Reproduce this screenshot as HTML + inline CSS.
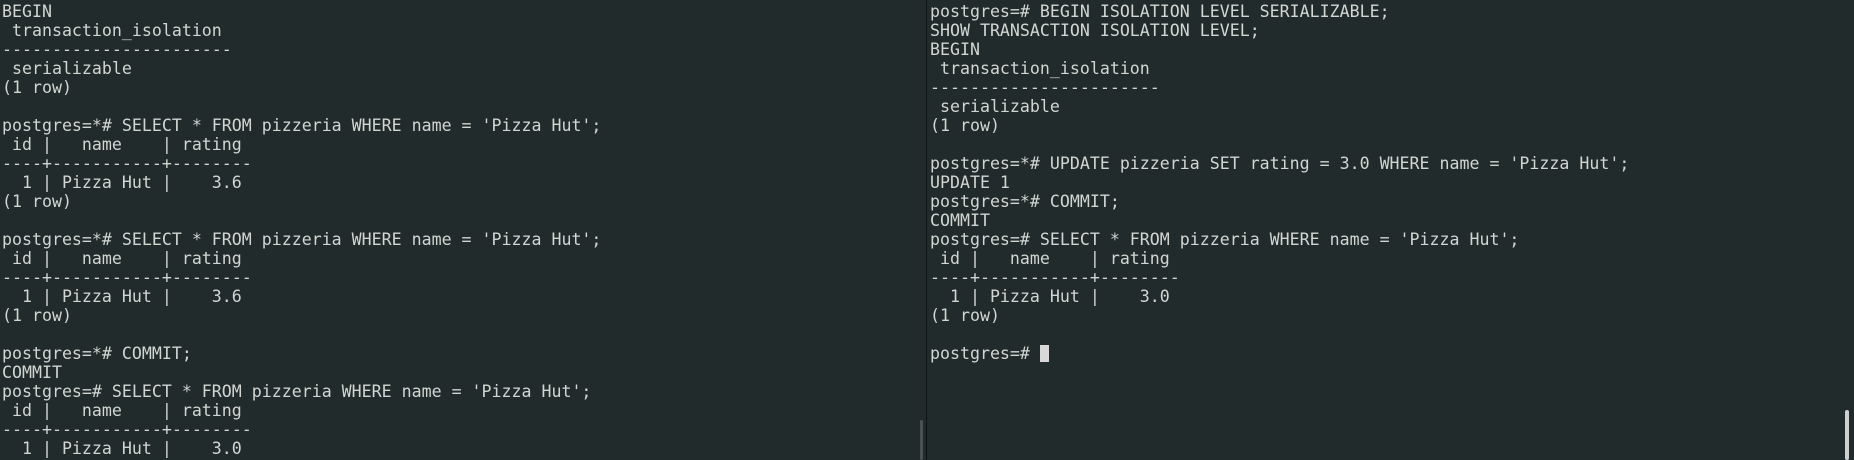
<!DOCTYPE html>
<html><head><meta charset="utf-8"><style>
html,body{margin:0;padding:0;width:1854px;height:460px;overflow:hidden;background:#212b2b;}
.pane{position:absolute;top:0;height:460px;overflow:hidden;}
pre{margin:0;font-family:"DejaVu Sans Mono","Liberation Mono",monospace;font-size:16.6px;line-height:19px;color:#d2d6d2;padding-top:2px;white-space:pre;}
#l{left:0;width:926px;}
#l pre{padding-left:2px;}
#r{left:928px;width:926px;}
#r pre{padding-left:2px;}
.div{position:absolute;left:926px;top:0;width:1px;height:460px;background:#0e1414;}
.sb{position:absolute;width:3px;background:#4a5252;border-radius:2px;}
.cur{display:inline-block;width:9px;height:17px;background:#d8d8d8;vertical-align:-3px;}
</style></head><body>
<div class="pane" id="l"><pre>BEGIN
 transaction_isolation
-----------------------
 serializable
(1 row)

postgres=*# SELECT * FROM pizzeria WHERE name = 'Pizza Hut';
 id |   name    | rating
----+-----------+--------
  1 | Pizza Hut |    3.6
(1 row)

postgres=*# SELECT * FROM pizzeria WHERE name = 'Pizza Hut';
 id |   name    | rating
----+-----------+--------
  1 | Pizza Hut |    3.6
(1 row)

postgres=*# COMMIT;
COMMIT
postgres=# SELECT * FROM pizzeria WHERE name = 'Pizza Hut';
 id |   name    | rating
----+-----------+--------
  1 | Pizza Hut |    3.0</pre></div>
<div class="div"></div>
<div class="sb" style="left:920px;top:420px;height:40px;"></div>
<div class="pane" id="r"><pre>postgres=# BEGIN ISOLATION LEVEL SERIALIZABLE;
SHOW TRANSACTION ISOLATION LEVEL;
BEGIN
 transaction_isolation
-----------------------
 serializable
(1 row)

postgres=*# UPDATE pizzeria SET rating = 3.0 WHERE name = 'Pizza Hut';
UPDATE 1
postgres=*# COMMIT;
COMMIT
postgres=# SELECT * FROM pizzeria WHERE name = 'Pizza Hut';
 id |   name    | rating
----+-----------+--------
  1 | Pizza Hut |    3.0
(1 row)

postgres=# <span class="cur"></span></pre></div>
<div class="sb" style="left:1845px;top:410px;height:50px;width:4px;background:#d0d0d0;"></div>
</body></html>
